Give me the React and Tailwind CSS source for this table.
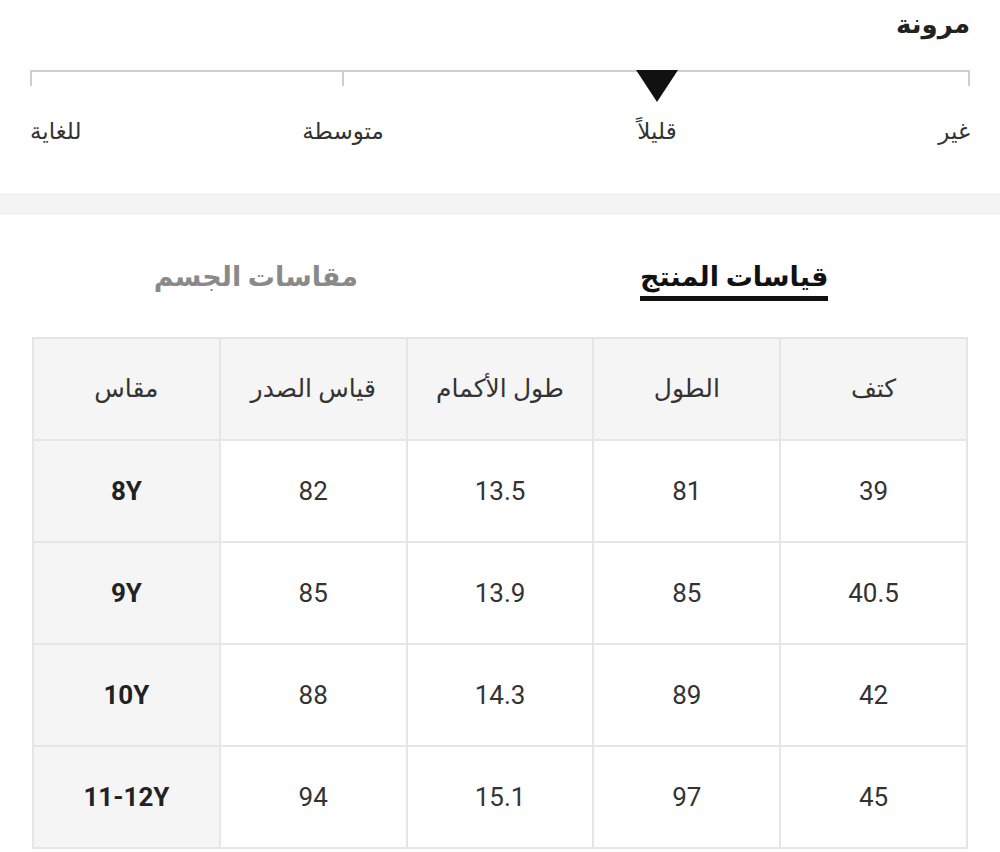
const rows = [
  { size: '8Y', chest: '82', sleeve: '13.5', length: '81', shoulder: '39' },
  { size: '9Y', chest: '85', sleeve: '13.9', length: '85', shoulder: '40.5' },
  { size: '10Y', chest: '88', sleeve: '14.3', length: '89', shoulder: '42' },
  { size: '11-12Y', chest: '94', sleeve: '15.1', length: '97', shoulder: '45' },
];

const headers = ['كتف', 'الطول', 'طول الأكمام', 'قياس الصدر', 'مقاس'];

function Cell({ children, className = '' }) {
  return (
    <div className={`flex h-[102px] items-center justify-center border-r-2 border-b-2 border-[#e6e6e6] ${className}`}>
      {children}
    </div>
  );
}

export default function App() {
  return (
    <div className="min-h-[852px] bg-white font-['Roboto','DejaVu_Sans',sans-serif] text-[#222]">
      {/* stretch scale */}
      <div className="px-[30px] pt-[4px]">
        <div dir="rtl" className="text-[26px] font-semibold leading-[40px] text-[#222]">مرونة</div>
        <div className="relative mt-[26px] h-[16px]">
          <div className="absolute left-0 right-0 top-0 h-[2px] bg-[#cfcfcf]" />
          <div className="absolute left-0 top-0 h-[16px] w-[2px] bg-[#cfcfcf]" />
          <div className="absolute left-[312px] top-0 h-[16px] w-[2px] bg-[#cfcfcf]" />
          <div className="absolute right-0 top-0 h-[16px] w-[2px] bg-[#cfcfcf]" />
          <svg className="absolute left-[606px] top-0" width="42" height="32" viewBox="0 0 42 32">
            <polygon points="0,0 42,0 21,32" fill="#111" />
          </svg>
        </div>
        <div className="relative mt-[29px] h-[34px] text-[23px] leading-[34px] text-[#333]">
          <span className="absolute left-0">للغاية</span>
          <span className="absolute left-[313px] -translate-x-1/2">متوسطة</span>
          <span className="absolute left-[627px] -translate-x-1/2">قليلاً</span>
          <span className="absolute right-0">غير</span>
        </div>
      </div>

      <div className="mt-[44px] h-[22px] bg-[#f3f3f3]" />

      {/* tabs */}
      <div dir="rtl" className="mt-[44px] flex items-start justify-center gap-[282px] pr-[18px]">
        <div className="border-b-[5px] border-[#111] text-[27px] font-bold leading-[37px] text-[#111]">قياسات المنتج</div>
        <div className="text-[27px] font-bold leading-[37px] text-[#8a8a8a]">مقاسات الجسم</div>
      </div>

      {/* size table */}
      <div dir="rtl" className="mx-[32px] mt-[36px] grid grid-cols-5 border-t-2 border-l-2 border-[#e6e6e6] text-[26px]">
        {headers.map((h) => (
          <Cell key={h} className="bg-[#f5f5f5] text-[25px] text-[#333]">{h}</Cell>
        ))}
        {rows.map((r) => (
          <div key={r.size} className="contents">
            <Cell className="text-[#333]">{r.shoulder}</Cell>
            <Cell className="text-[#333]">{r.length}</Cell>
            <Cell className="text-[#333]">{r.sleeve}</Cell>
            <Cell className="text-[#333]">{r.chest}</Cell>
            <Cell className="bg-[#f5f5f5] font-bold text-[#222]"><span dir="ltr">{r.size}</span></Cell>
          </div>
        ))}
      </div>
    </div>
  );
}
